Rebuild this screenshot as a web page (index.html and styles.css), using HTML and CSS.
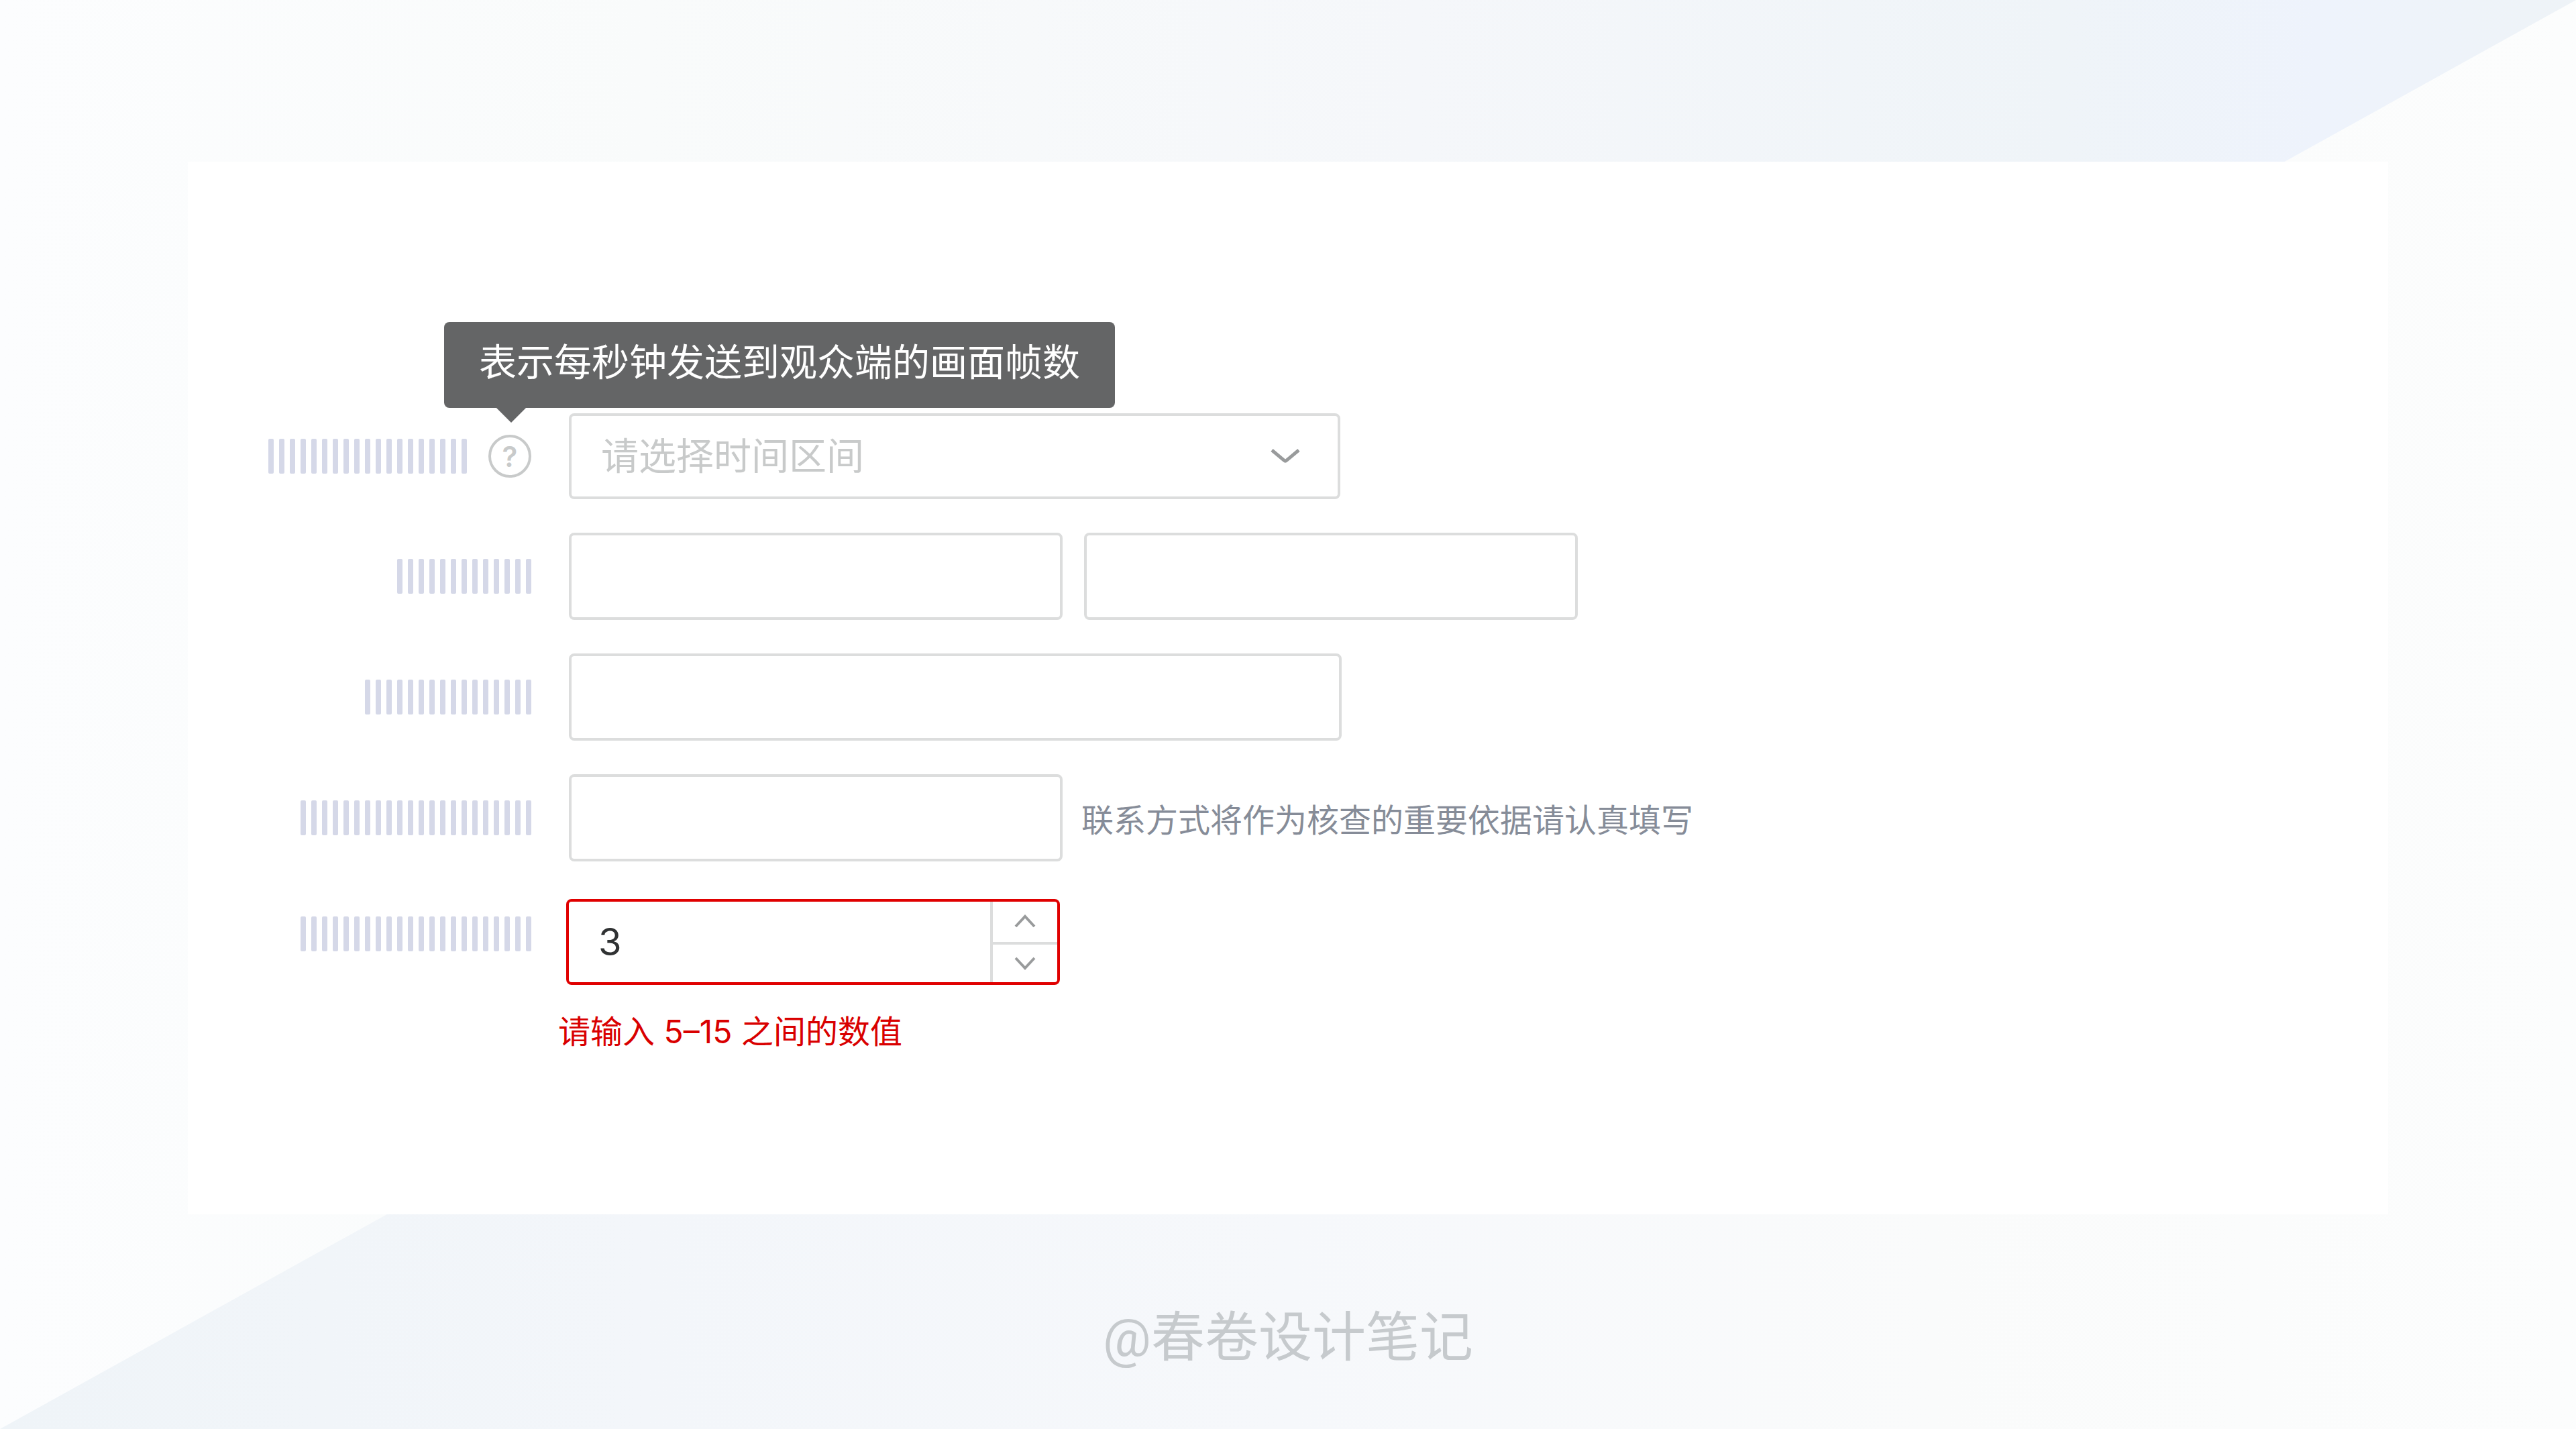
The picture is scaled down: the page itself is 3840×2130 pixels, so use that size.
FILE: index.html
```html
<!DOCTYPE html>
<html lang="zh-CN">
<head>
    <meta charset="UTF-8">
    <meta name="viewport" content="width=device-width, initial-scale=1.0">
    <title>春卷设计笔记</title>
    <link rel="stylesheet" href="styles.css">
</head>
<body>
    <main class="card">
        <form class="form" novalidate>
            <div class="form-row">
                <div class="label-cell">
                    <label class="bars" for="range" style="--bars: 19"></label>
                    <div class="help">
                        <button type="button" class="help-button" aria-describedby="range-tip">?</button>
                        <div class="tooltip" id="range-tip" role="tooltip">表示每秒钟发送到观众端的画面帧数</div>
                    </div>
                </div>
                <div class="field">
                    <div class="select-wrap">
                        <select class="control select" id="range" aria-label="时间区间">
                            <option>请选择时间区间</option>
                        </select>
                        <svg class="select-arrow" viewBox="0 0 48 28" aria-hidden="true">
                            <path d="M4 5 L22 20 Q24 22 26 20 L44 5"/>
                        </svg>
                    </div>
                </div>
            </div>

            <div class="form-row">
                <div class="label-cell">
                    <label class="bars" for="pair-a" style="--bars: 13"></label>
                </div>
                <div class="field field-pair">
                    <input class="control" id="pair-a" type="text" aria-label="输入框一">
                    <input class="control" id="pair-b" type="text" aria-label="输入框二">
                </div>
            </div>

            <div class="form-row">
                <div class="label-cell">
                    <label class="bars" for="single" style="--bars: 16"></label>
                </div>
                <div class="field">
                    <input class="control wide" id="single" type="text" aria-label="输入框三">
                </div>
            </div>

            <div class="form-row">
                <div class="label-cell">
                    <label class="bars" for="contact" style="--bars: 22"></label>
                </div>
                <div class="field">
                    <input class="control" id="contact" type="text" aria-label="联系方式">
                    <span class="hint">联系方式将作为核查的重要依据请认真填写</span>
                </div>
            </div>

            <div class="form-row row-error">
                <div class="label-cell">
                    <label class="bars" for="amount" style="--bars: 22"></label>
                </div>
                <div class="error-field">
                    <div class="stepper">
                        <input class="stepper-input" id="amount" type="number" value="3" min="5" max="15" aria-label="数值" aria-describedby="amount-error">
                        <div class="stepper-buttons">
                            <button type="button" class="step-button" aria-label="增加">
                                <svg class="step-arrow" viewBox="0 0 34 22" aria-hidden="true">
                                    <path d="M3 18 L17 3 L31 18"/>
                                </svg>
                            </button>
                            <button type="button" class="step-button" aria-label="减少">
                                <svg class="step-arrow" viewBox="0 0 34 22" aria-hidden="true">
                                    <path d="M3 3 L17 18 L31 3"/>
                                </svg>
                            </button>
                        </div>
                    </div>
                    <p class="error-text" id="amount-error">请输入 5–15 之间的数值</p>
                </div>
            </div>
        </form>
    </main>
    <footer class="footer">@春卷设计笔记</footer>
</body>
</html>
```

FILE: styles.css
```css
* {
    box-sizing: border-box;
}

body {
    margin: 0;
    min-height: 100vh;
    display: flex;
    flex-direction: column;
    position: relative;
    font-family: Inter, "Noto Sans CJK SC", sans-serif;
    background: linear-gradient(to right, #eff4f8, #f3f6fa 25%, #f6f8fb 50%, #fafbfb 75%, #fcfdfd);
}

/* 左上三角背景 */
body::before {
    content: "";
    position: absolute;
    inset: 0;
    z-index: -1;
    clip-path: polygon(0 0, 100% 0, 0 100%);
    background: linear-gradient(to right, #fcfdfe, #f9fbfb 25%, #f5f7fa 55%, #eff4f8 80%, #eef3fc 90%, #eef3f7);
}

.card {
    flex: 1;
    margin: 241px 280px 0;
    padding: 375px 120px 120px;
    background: #fff;
}

.form {
    display: flex;
    flex-direction: column;
    gap: 50px;
}

.form-row {
    display: flex;
    align-items: center;
    gap: 56px;
}

.label-cell {
    width: 392px;
    flex-shrink: 0;
    display: flex;
    justify-content: flex-end;
    align-items: center;
    gap: 32px;
}

/* 标签占位竖条 */
.bars {
    width: calc(var(--bars) * 16px - 8px);
    height: 52px;
    background: url("data:image/svg+xml,%3Csvg xmlns='http://www.w3.org/2000/svg' width='16' height='52'%3E%3Crect width='8' height='52' rx='2' fill='%23d5d8e8'/%3E%3C/svg%3E") repeat-x;
}

.field {
    display: flex;
    align-items: center;
    gap: 28px;
}

.field-pair {
    gap: 32px;
}

.control {
    display: block;
    width: 736px;
    height: 130px;
    padding: 0 44px;
    border: 4px solid #dcdddd;
    border-radius: 8px;
    background: #fff;
    font-family: inherit;
    font-size: 56px;
    color: #303233;
    outline: none;
}

.wide {
    width: 1152px;
}

.select-wrap {
    position: relative;
}

.select {
    width: 1150px;
    height: 128px;
    appearance: none;
    color: #c8caca;
}

.select-arrow {
    position: absolute;
    right: 58px;
    top: 50px;
    width: 48px;
    height: 28px;
    pointer-events: none;
}

.select-arrow path,
.step-arrow path {
    fill: none;
    stroke: #999b9c;
    stroke-width: 5;
}

.step-arrow path {
    stroke-width: 4;
}

.help {
    position: relative;
}

.help-button {
    display: flex;
    justify-content: center;
    align-items: center;
    width: 64px;
    height: 64px;
    padding: 0;
    border: 4px solid #c8caca;
    border-radius: 50%;
    background: none;
    font-family: inherit;
    font-size: 42px;
    font-weight: 600;
    color: #c8caca;
}

.tooltip {
    position: absolute;
    left: -66px;
    bottom: 104px;
    z-index: 1;
    height: 128px;
    padding: 0 52px;
    border-radius: 8px;
    background: #646566;
    color: #fff;
    font-size: 56px;
    line-height: 120px;
    white-space: nowrap;
}

.tooltip::after {
    content: "";
    position: absolute;
    left: 78px;
    top: 100%;
    border: 22px solid transparent;
    border-top-color: #646566;
    border-bottom: 0;
}

.hint {
    font-size: 48px;
    color: #868c98;
    white-space: nowrap;
}

.row-error {
    align-items: flex-start;
    gap: 40px;
    margin-top: 6px;
}

.row-error .label-cell {
    padding-top: 26px;
}

.stepper {
    display: flex;
    width: 736px;
    height: 128px;
    margin-left: 12px;
    border: 4px solid #e00000;
    border-radius: 8px;
    overflow: hidden;
}

.stepper-input {
    flex: 1;
    min-width: 0;
    padding: 0 44px;
    border: 0;
    background: none;
    font-family: inherit;
    font-size: 56px;
    color: #303233;
    outline: none;
    appearance: textfield;
}

.stepper-input::-webkit-inner-spin-button {
    appearance: none;
}

.stepper-buttons {
    display: grid;
    grid-template-rows: 60px 60px;
    width: 100px;
    border-left: 4px solid #dcdddd;
}

.step-button {
    display: flex;
    justify-content: center;
    align-items: center;
    padding: 0;
    border: 0;
    background: none;
}

.step-button + .step-button {
    border-top: 4px solid #dcdddd;
}

.step-arrow {
    width: 34px;
    height: 22px;
}

.error-text {
    margin: 34px 0 0;
    font-size: 48px;
    line-height: 72px;
    color: #d90000;
}

.footer {
    height: 320px;
    padding-top: 124px;
    text-align: center;
    font-family: Roboto, "Noto Sans CJK SC", sans-serif;
    font-size: 80px;
    line-height: 120px;
    color: #c6cacd;
}
```
